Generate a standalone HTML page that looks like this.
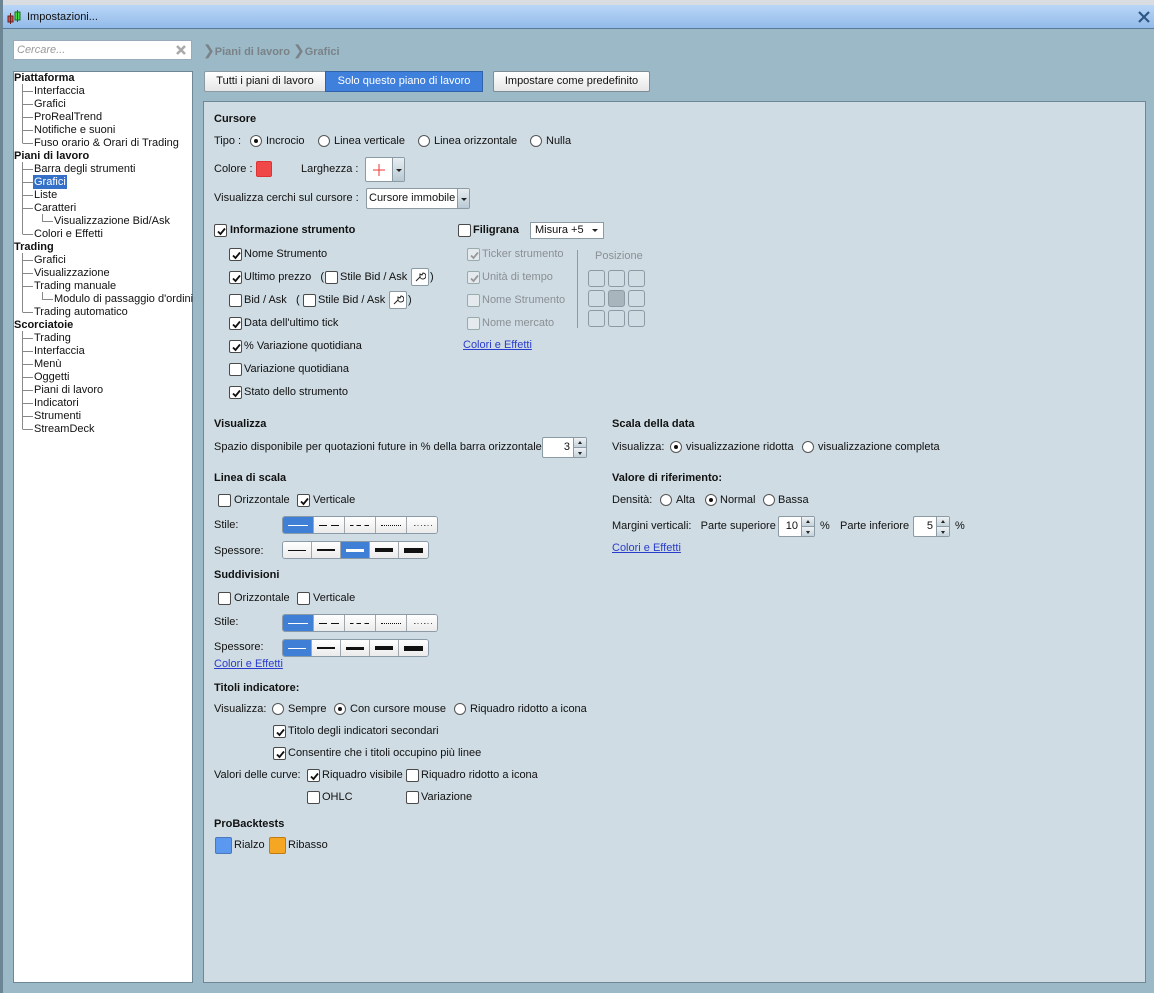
<!DOCTYPE html>
<html><head><meta charset="utf-8"><style>
*{box-sizing:border-box;margin:0;padding:0}
body{width:1154px;height:993px;position:relative;overflow:hidden;background:#9bb9c6;font-family:"Liberation Sans",sans-serif;font-size:11px;color:#111}
.a{position:absolute}
.t{position:absolute;line-height:14px;white-space:nowrap}
.b{font-weight:bold}
.g{color:#8a8f94}
.cb{position:absolute;width:13px;height:13px;background:#fff;border:1px solid #4a4a4a;border-radius:2px}
.cb.d{border-color:#9aa;background:#e4eaee}
.cb svg{position:absolute;left:1px;top:1px}
.rd{position:absolute;width:12px;height:12px;background:#fff;border:1px solid #555;border-radius:50%}
.rd.on:after{content:"";position:absolute;left:3px;top:3px;width:4px;height:4px;border-radius:50%;background:#111}
.lk{position:absolute;color:#2a3ccc;text-decoration:underline;line-height:14px;white-space:nowrap}
.seg{position:absolute;display:flex;border:1px solid #8a9aa6;border-radius:3px;overflow:hidden;background:#f4f4f4}
.seg div{border-right:1px solid #a0a8ae;position:relative;background:linear-gradient(#fff,#ebebeb)}
.seg div:last-child{border-right:none}
.seg div.s{background:#3f7fd6}
.seg i{position:absolute;left:5px;right:5px;top:50%;display:block}
.dd{position:absolute;background:#fff;border:1px solid #8c9aa4;border-radius:2px}
.arr{position:absolute;right:0;top:0;bottom:0;width:12px;background:linear-gradient(#e8eef2,#b9c9d4);border-left:1px solid #8c9aa4}
.arr:after{content:"";position:absolute;left:3px;top:50%;margin-top:-1px;border:3px solid transparent;border-top:3px solid #222;border-bottom:none}
.sp{position:absolute;background:#fff;border:1px solid #8c9aa4;border-radius:2px;text-align:right;line-height:18px;padding-right:16px}
.sp .u{position:absolute;right:0;top:0;width:13px;height:50%;background:linear-gradient(#eef2f5,#c4d2db);border-left:1px solid #8c9aa4;border-bottom:1px solid #8c9aa4}
.sp .dn{position:absolute;right:0;bottom:0;width:13px;height:50%;background:linear-gradient(#eef2f5,#c4d2db);border-left:1px solid #8c9aa4}
.sp .u:after{content:"";position:absolute;left:4px;top:3px;border:2px solid transparent;border-bottom:3px solid #222;border-top:none}
.sp .dn:after{content:"";position:absolute;left:4px;top:4px;border:2px solid transparent;border-top:3px solid #222;border-bottom:none}
.pos{position:absolute;width:17px;height:17px;border:1px solid #8d9aa3;border-radius:3px}
</style></head><body>
<div class="a" style="left:0;top:0;width:1154px;height:5px;background:#d9dde2"></div>
<div class="a" style="left:0;top:0;width:3px;height:993px;background:#6b8594"></div>
<div class="a" style="left:3px;top:5px;width:1151px;height:24px;background:linear-gradient(#b9d6f7,#93bbe9);border-bottom:1px solid #5a7a9a"></div>
<svg class="a" style="left:7px;top:10px" width="14" height="14"><rect x="1" y="6" width="5" height="6" fill="#e44" stroke="#622"/><line x1="3.5" y1="3" x2="3.5" y2="14" stroke="#622"/><rect x="8" y="2" width="5" height="8" fill="#4d4" stroke="#262"/><line x1="10.5" y1="0" x2="10.5" y2="12" stroke="#262"/></svg>
<div class="t" style="left:27px;top:10px;font-size:11px">Impostazioni...</div>
<svg class="a" style="left:1138px;top:11px" width="12" height="12"><path d="M1 1L11 11M11 1L1 11" stroke="#2e5783" stroke-width="2.2"/></svg>

<div class="a" style="left:13px;top:40px;width:179px;height:20px;background:#fff;border:1px solid #9ab"></div>
<div class="t g" style="left:17px;top:43px;font-style:italic;color:#999">Cercare...</div>
<svg class="a" style="left:176px;top:45px" width="10" height="10"><path d="M1 1L9 9M9 1L1 9" stroke="#aaa" stroke-width="2.5"/></svg>
<div class="t b" style="left:203px;top:43px;color:#7a8288;font-size:11px"><span style="font-weight:normal;font-size:14px">❯</span>Piani di lavoro <span style="font-weight:normal;font-size:14px">❯</span>Grafici</div>

<div class="a" style="left:13px;top:71px;width:180px;height:912px;background:#fff;border:1px solid #6d8796"></div>
<div class="a" style="left:13px;top:71px;width:180px;height:912px">
<svg class="a" style="left:0;top:0" width="180" height="370">
<g stroke="#888" stroke-width="1" fill="none" shape-rendering="crispEdges">
<path d="M9.5 13V72M9.5 20.5H20M9.5 33.5H20M9.5 46.5H20M9.5 59.5H20M9.5 72.5H20"/>
<path d="M9.5 91V163M9.5 98.5H20M9.5 111.5H20M9.5 124.5H20M9.5 137.5H20M9.5 163.5H20M29.5 143V150.5H40"/>
<path d="M9.5 182V241M9.5 189.5H20M9.5 202.5H20M9.5 215.5H20M9.5 241.5H20M29.5 221V228.5H40"/>
<path d="M9.5 260V358M9.5 267.5H20M9.5 280.5H20M9.5 293.5H20M9.5 306.5H20M9.5 319.5H20M9.5 332.5H20M9.5 345.5H20M9.5 358.5H20"/>
</g></svg>
<div class="t b" style="left:1px;top:0">Piattaforma</div>
<div class="t" style="left:21px;top:13px">Interfaccia</div>
<div class="t" style="left:21px;top:26px">Grafici</div>
<div class="t" style="left:21px;top:39px">ProRealTrend</div>
<div class="t" style="left:21px;top:52px">Notifiche e suoni</div>
<div class="t" style="left:21px;top:65px">Fuso orario &amp; Orari di Trading</div>
<div class="t b" style="left:1px;top:78px">Piani di lavoro</div>
<div class="t" style="left:21px;top:91px">Barra degli strumenti</div>
<div class="t" style="left:20px;top:104px;background:#3470c8;color:#fff;padding:0 1px">Grafici</div>
<div class="t" style="left:21px;top:117px">Liste</div>
<div class="t" style="left:21px;top:130px">Caratteri</div>
<div class="t" style="left:41px;top:143px">Visualizzazione Bid/Ask</div>
<div class="t" style="left:21px;top:156px">Colori e Effetti</div>
<div class="t b" style="left:1px;top:169px">Trading</div>
<div class="t" style="left:21px;top:182px">Grafici</div>
<div class="t" style="left:21px;top:195px">Visualizzazione</div>
<div class="t" style="left:21px;top:208px">Trading manuale</div>
<div class="t" style="left:41px;top:221px">Modulo di passaggio d'ordini</div>
<div class="t" style="left:21px;top:234px">Trading automatico</div>
<div class="t b" style="left:1px;top:247px">Scorciatoie</div>
<div class="t" style="left:21px;top:260px">Trading</div>
<div class="t" style="left:21px;top:273px">Interfaccia</div>
<div class="t" style="left:21px;top:286px">Menù</div>
<div class="t" style="left:21px;top:299px">Oggetti</div>
<div class="t" style="left:21px;top:312px">Piani di lavoro</div>
<div class="t" style="left:21px;top:325px">Indicatori</div>
<div class="t" style="left:21px;top:338px">Strumenti</div>
<div class="t" style="left:21px;top:351px">StreamDeck</div>
</div>

<div class="a" style="left:204px;top:71px;width:122px;height:21px;background:linear-gradient(#fff,#e6e6e6);border:1px solid #8c9aa4;border-radius:2px 0 0 2px"></div>
<div class="t" style="left:204px;top:74px;width:122px;text-align:center">Tutti i piani di lavoro</div>
<div class="a" style="left:325px;top:71px;width:158px;height:21px;background:#3f80dc;border:1px solid #2f62a8"></div>
<div class="t" style="left:325px;top:74px;width:158px;text-align:center;color:#fff">Solo questo piano di lavoro</div>
<div class="a" style="left:493px;top:71px;width:157px;height:21px;background:linear-gradient(#fff,#e6e6e6);border:1px solid #7f8c95;border-radius:2px"></div>
<div class="t" style="left:493px;top:74px;width:157px;text-align:center">Impostare come predefinito</div>

<div class="a" style="left:203px;top:101px;width:943px;height:882px;background:#cfdce3;border:1px solid #6d8796"></div>

<div class="t b" style="left:214px;top:112px">Cursore</div>
<div class="t" style="left:214px;top:134px">Tipo :</div>
<div class="rd on" style="left:250px;top:135px"></div><div class="t" style="left:266px;top:134px">Incrocio</div>
<div class="rd" style="left:318px;top:135px"></div><div class="t" style="left:334px;top:134px">Linea verticale</div>
<div class="rd" style="left:418px;top:135px"></div><div class="t" style="left:434px;top:134px">Linea orizzontale</div>
<div class="rd" style="left:530px;top:135px"></div><div class="t" style="left:546px;top:134px">Nulla</div>

<div class="t" style="left:214px;top:162px">Colore :</div>
<div class="a" style="left:256px;top:161px;width:16px;height:16px;background:#f04848;border-radius:2px;border:1px solid #d33"></div>
<div class="t" style="left:301px;top:162px">Larghezza :</div>
<div class="dd" style="left:365px;top:157px;width:40px;height:25px"><svg class="a" style="left:6px;top:5px" width="14" height="14"><path d="M7 1V13M1 7H13" stroke="#e33" stroke-width="1"/></svg><div class="arr"></div></div>

<div class="t" style="left:214px;top:191px">Visualizza cerchi sul cursore :</div>
<div class="dd" style="left:366px;top:188px;width:104px;height:21px"><div class="t" style="left:2px;top:2px">Cursore immobile</div><div class="arr"></div></div>

<div class="cb" style="left:214px;top:224px"><svg width="11" height="11"><path d="M2 5.5L4.5 8L9 2.5" stroke="#111" stroke-width="1.8" fill="none"/></svg></div>
<div class="t b" style="left:230px;top:223px">Informazione strumento</div>
<div class="cb" style="left:458px;top:224px"></div>
<div class="t b" style="left:473px;top:223px">Filigrana</div>
<div class="a" style="left:530px;top:222px;width:74px;height:17px;background:#fff;border:1px solid #8c9aa4"></div>
<div class="t" style="left:535px;top:223px">Misura +5</div>
<div class="a" style="left:592px;top:229px;border:3px solid transparent;border-top:3px solid #222;border-bottom:none"></div>

<div class="cb" style="left:229px;top:248px"><svg width="11" height="11"><path d="M2 5.5L4.5 8L9 2.5" stroke="#111" stroke-width="1.8" fill="none"/></svg></div><div class="t" style="left:244px;top:247px">Nome Strumento</div>
<div class="cb" style="left:229px;top:271px"><svg width="11" height="11"><path d="M2 5.5L4.5 8L9 2.5" stroke="#111" stroke-width="1.8" fill="none"/></svg></div><div class="t" style="left:244px;top:270px">Ultimo prezzo &nbsp;&nbsp;(</div>
<div class="cb" style="left:325px;top:271px"></div><div class="t" style="left:340px;top:270px">Stile Bid / Ask</div>
<div class="a" style="left:411px;top:268px;width:18px;height:18px;background:#fff;border:1px solid #8c9aa4;border-radius:2px"><svg class="a" style="left:2px;top:2px" width="12" height="12"><path d="M2 10L6 6M6 6A3 3 0 1 0 9 2L8 4L6 3Z" stroke="#222" fill="none"/></svg></div><div class="t" style="left:430px;top:270px">)</div>
<div class="cb" style="left:229px;top:294px"></div><div class="t" style="left:244px;top:293px">Bid / Ask &nbsp;&nbsp;(</div>
<div class="cb" style="left:303px;top:294px"></div><div class="t" style="left:318px;top:293px">Stile Bid / Ask</div>
<div class="a" style="left:389px;top:291px;width:18px;height:18px;background:#fff;border:1px solid #8c9aa4;border-radius:2px"><svg class="a" style="left:2px;top:2px" width="12" height="12"><path d="M2 10L6 6M6 6A3 3 0 1 0 9 2L8 4L6 3Z" stroke="#222" fill="none"/></svg></div><div class="t" style="left:408px;top:293px">)</div>
<div class="cb" style="left:229px;top:317px"><svg width="11" height="11"><path d="M2 5.5L4.5 8L9 2.5" stroke="#111" stroke-width="1.8" fill="none"/></svg></div><div class="t" style="left:244px;top:316px">Data dell'ultimo tick</div>
<div class="cb" style="left:229px;top:340px"><svg width="11" height="11"><path d="M2 5.5L4.5 8L9 2.5" stroke="#111" stroke-width="1.8" fill="none"/></svg></div><div class="t" style="left:244px;top:339px">% Variazione quotidiana</div>
<div class="cb" style="left:229px;top:363px"></div><div class="t" style="left:244px;top:362px">Variazione quotidiana</div>
<div class="cb" style="left:229px;top:386px"><svg width="11" height="11"><path d="M2 5.5L4.5 8L9 2.5" stroke="#111" stroke-width="1.8" fill="none"/></svg></div><div class="t" style="left:244px;top:385px">Stato dello strumento</div>

<div class="cb d" style="left:467px;top:248px"><svg width="11" height="11"><path d="M2 5.5L4.5 8L9 2.5" stroke="#999" stroke-width="1.8" fill="none"/></svg></div><div class="t g" style="left:482px;top:247px">Ticker strumento</div>
<div class="cb d" style="left:467px;top:271px"><svg width="11" height="11"><path d="M2 5.5L4.5 8L9 2.5" stroke="#999" stroke-width="1.8" fill="none"/></svg></div><div class="t g" style="left:482px;top:270px">Unità di tempo</div>
<div class="cb d" style="left:467px;top:294px"></div><div class="t g" style="left:482px;top:293px">Nome Strumento</div>
<div class="cb d" style="left:467px;top:317px"></div><div class="t g" style="left:482px;top:316px">Nome mercato</div>
<div class="lk" style="left:463px;top:338px">Colori e Effetti</div>
<div class="a" style="left:577px;top:250px;width:1px;height:78px;background:#8d9aa3"></div>
<div class="t g" style="left:595px;top:249px">Posizione</div>
<div class="pos" style="left:588px;top:270px"></div><div class="pos" style="left:608px;top:270px"></div><div class="pos" style="left:628px;top:270px"></div>
<div class="pos" style="left:588px;top:290px"></div><div class="pos" style="left:608px;top:290px;background:#a9b5bd"></div><div class="pos" style="left:628px;top:290px"></div>
<div class="pos" style="left:588px;top:310px"></div><div class="pos" style="left:608px;top:310px"></div><div class="pos" style="left:628px;top:310px"></div>

<div class="t b" style="left:214px;top:417px">Visualizza</div>
<div class="t" style="left:214px;top:440px">Spazio disponibile per quotazioni future in % della barra orizzontale</div>
<div class="sp" style="left:542px;top:437px;width:45px;height:21px">3<div class="u"></div><div class="dn"></div></div>

<div class="t b" style="left:214px;top:471px">Linea di scala</div>
<div class="cb" style="left:218px;top:494px"></div><div class="t" style="left:234px;top:493px">Orizzontale</div>
<div class="cb" style="left:297px;top:494px"><svg width="11" height="11"><path d="M2 5.5L4.5 8L9 2.5" stroke="#111" stroke-width="1.8" fill="none"/></svg></div><div class="t" style="left:313px;top:493px">Verticale</div>
<div class="t" style="left:214px;top:518px">Stile:</div>
<div class="seg" style="left:282px;top:516px;height:18px">
<div class="s" style="width:31px"><i style="border-top:1px solid #fff"></i></div>
<div style="width:31px"><i style="border-top:1px solid;border-image:repeating-linear-gradient(90deg,#111 0 8px,transparent 8px 12px) 1"></i></div>
<div style="width:31px"><i style="border-top:1px solid;border-image:repeating-linear-gradient(90deg,#111 0 4px,transparent 4px 7px) 1"></i></div>
<div style="width:31px"><i style="border-top:1px dotted #111"></i></div>
<div style="width:30px"><i style="border-top:1px solid;border-image:repeating-linear-gradient(90deg,#555 0 1px,transparent 1px 3px) 1"></i></div>
</div>
<div class="t" style="left:214px;top:544px">Spessore:</div>
<div class="seg" style="left:282px;top:541px;height:18px">
<div style="width:29px"><i style="border-top:1px solid #111"></i></div>
<div style="width:29px"><i style="border-top:2px solid #111;margin-top:-1px"></i></div>
<div class="s" style="width:29px"><i style="border-top:3px solid #fff;margin-top:-1px"></i></div>
<div style="width:29px"><i style="border-top:4px solid #111;margin-top:-2px"></i></div>
<div style="width:29px"><i style="border-top:5px solid #111;margin-top:-2px"></i></div>
</div>

<div class="t b" style="left:214px;top:568px">Suddivisioni</div>
<div class="cb" style="left:218px;top:592px"></div><div class="t" style="left:234px;top:591px">Orizzontale</div>
<div class="cb" style="left:297px;top:592px"></div><div class="t" style="left:313px;top:591px">Verticale</div>
<div class="t" style="left:214px;top:615px">Stile:</div>
<div class="seg" style="left:282px;top:614px;height:18px">
<div class="s" style="width:31px"><i style="border-top:1px solid #fff"></i></div>
<div style="width:31px"><i style="border-top:1px solid;border-image:repeating-linear-gradient(90deg,#111 0 8px,transparent 8px 12px) 1"></i></div>
<div style="width:31px"><i style="border-top:1px solid;border-image:repeating-linear-gradient(90deg,#111 0 4px,transparent 4px 7px) 1"></i></div>
<div style="width:31px"><i style="border-top:1px dotted #111"></i></div>
<div style="width:30px"><i style="border-top:1px solid;border-image:repeating-linear-gradient(90deg,#555 0 1px,transparent 1px 3px) 1"></i></div>
</div>
<div class="t" style="left:214px;top:640px">Spessore:</div>
<div class="seg" style="left:282px;top:639px;height:18px">
<div class="s" style="width:29px"><i style="border-top:1px solid #fff"></i></div>
<div style="width:29px"><i style="border-top:2px solid #111;margin-top:-1px"></i></div>
<div style="width:29px"><i style="border-top:3px solid #111;margin-top:-1px"></i></div>
<div style="width:29px"><i style="border-top:4px solid #111;margin-top:-2px"></i></div>
<div style="width:29px"><i style="border-top:5px solid #111;margin-top:-2px"></i></div>
</div>
<div class="lk" style="left:214px;top:657px">Colori e Effetti</div>

<div class="t b" style="left:214px;top:681px">Titoli indicatore:</div>
<div class="t" style="left:214px;top:702px">Visualizza:</div>
<div class="rd" style="left:272px;top:703px"></div><div class="t" style="left:288px;top:702px">Sempre</div>
<div class="rd on" style="left:334px;top:703px"></div><div class="t" style="left:350px;top:702px">Con cursore mouse</div>
<div class="rd" style="left:454px;top:703px"></div><div class="t" style="left:470px;top:702px">Riquadro ridotto a icona</div>
<div class="cb" style="left:273px;top:725px"><svg width="11" height="11"><path d="M2 5.5L4.5 8L9 2.5" stroke="#111" stroke-width="1.8" fill="none"/></svg></div><div class="t" style="left:288px;top:724px">Titolo degli indicatori secondari</div>
<div class="cb" style="left:273px;top:747px"><svg width="11" height="11"><path d="M2 5.5L4.5 8L9 2.5" stroke="#111" stroke-width="1.8" fill="none"/></svg></div><div class="t" style="left:288px;top:746px">Consentire che i titoli occupino più linee</div>
<div class="t" style="left:214px;top:768px">Valori delle curve:</div>
<div class="cb" style="left:307px;top:769px"><svg width="11" height="11"><path d="M2 5.5L4.5 8L9 2.5" stroke="#111" stroke-width="1.8" fill="none"/></svg></div><div class="t" style="left:322px;top:768px">Riquadro visibile</div>
<div class="cb" style="left:406px;top:769px"></div><div class="t" style="left:421px;top:768px">Riquadro ridotto a icona</div>
<div class="cb" style="left:307px;top:791px"></div><div class="t" style="left:322px;top:790px">OHLC</div>
<div class="cb" style="left:406px;top:791px"></div><div class="t" style="left:421px;top:790px">Variazione</div>

<div class="t b" style="left:214px;top:817px">ProBacktests</div>
<div class="a" style="left:215px;top:837px;width:17px;height:17px;background:#5b98f0;border:1px solid #4a78b8;border-radius:2px"></div>
<div class="t" style="left:234px;top:838px">Rialzo</div>
<div class="a" style="left:269px;top:837px;width:17px;height:17px;background:#f5a623;border:1px solid #c07c10;border-radius:2px"></div>
<div class="t" style="left:288px;top:838px">Ribasso</div>

<div class="t b" style="left:612px;top:417px">Scala della data</div>
<div class="t" style="left:612px;top:440px">Visualizza:</div>
<div class="rd on" style="left:670px;top:441px"></div><div class="t" style="left:686px;top:440px">visualizzazione ridotta</div>
<div class="rd" style="left:802px;top:441px"></div><div class="t" style="left:818px;top:440px">visualizzazione completa</div>
<div class="t b" style="left:612px;top:471px">Valore di riferimento:</div>
<div class="t" style="left:612px;top:493px">Densità:</div>
<div class="rd" style="left:660px;top:494px"></div><div class="t" style="left:676px;top:493px">Alta</div>
<div class="rd on" style="left:705px;top:494px"></div><div class="t" style="left:720px;top:493px">Normal</div>
<div class="rd" style="left:763px;top:494px"></div><div class="t" style="left:778px;top:493px">Bassa</div>
<div class="t" style="left:612px;top:519px">Margini verticali: &nbsp;&nbsp;Parte superiore</div>
<div class="sp" style="left:778px;top:516px;width:37px;height:21px">10<div class="u"></div><div class="dn"></div></div>
<div class="t" style="left:820px;top:519px">%</div>
<div class="t" style="left:840px;top:519px">Parte inferiore</div>
<div class="sp" style="left:913px;top:516px;width:37px;height:21px">5<div class="u"></div><div class="dn"></div></div>
<div class="t" style="left:955px;top:519px">%</div>
<div class="lk" style="left:612px;top:541px">Colori e Effetti</div>
</body></html>
